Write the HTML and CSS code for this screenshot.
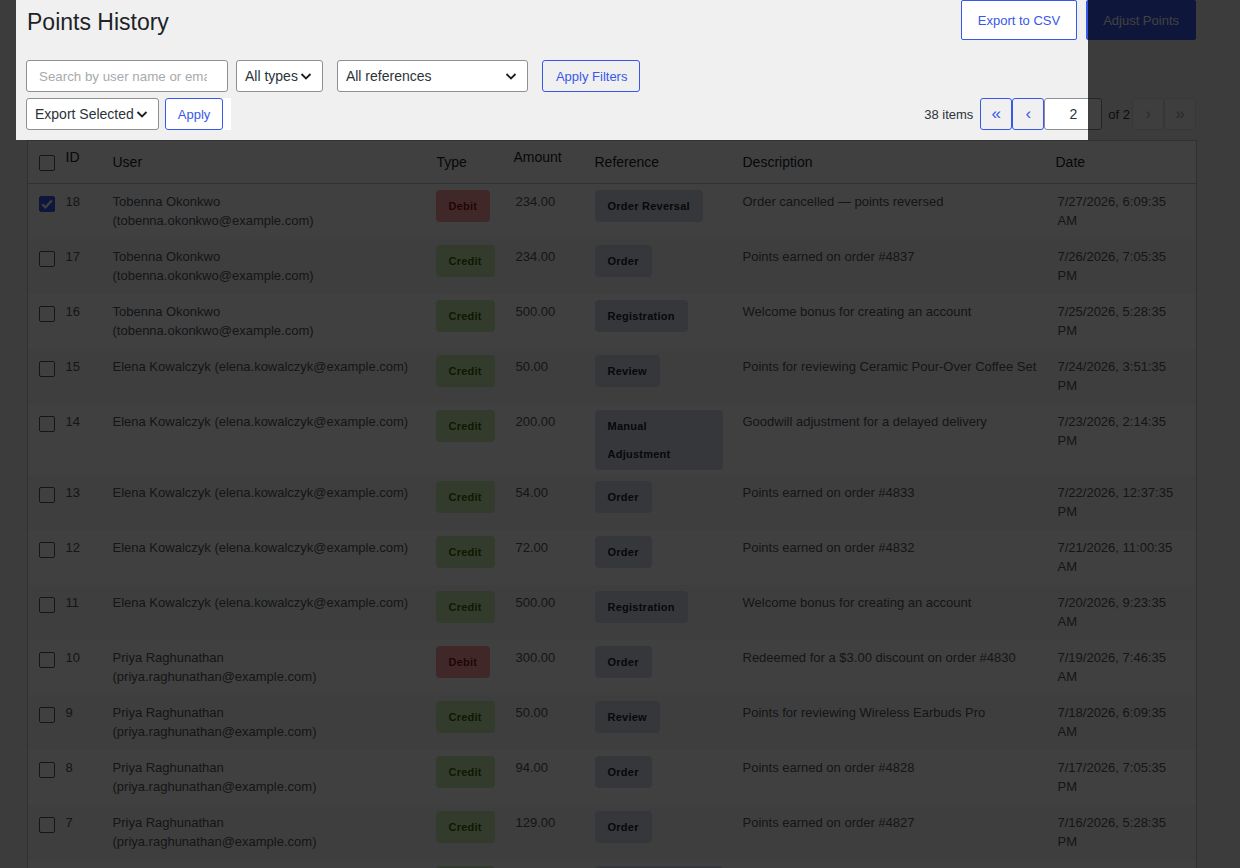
FILE: index.html
```html
<!DOCTYPE html>
<html lang="en">
<head>
<meta charset="utf-8">
<title>Points History</title>
<link rel="stylesheet" href="styles.css">
</head>
<body>
<div class="wrap">
  <header class="page-head">
    <h1 class="title">Points History</h1>
    <div class="head-actions">
      <button class="btn btn-secondary">Export to CSV</button>
      <button class="btn btn-primary">Adjust Points</button>
    </div>
  </header>

  <div class="filters">
    <input class="search" type="text" placeholder="Search by user name or email">
    <div class="select select-types"><span>All types</span><svg class="chev" viewBox="0 0 16 16" width="16" height="16"><path d="M3.5 6 L8 10.5 L12.5 6" fill="none" stroke="#1e1e1e" stroke-width="1.8"/></svg></div>
    <div class="select select-refs"><span>All references</span><svg class="chev" viewBox="0 0 16 16" width="16" height="16"><path d="M3.5 6 L8 10.5 L12.5 6" fill="none" stroke="#1e1e1e" stroke-width="1.8"/></svg></div>
    <button class="btn-small btn-outline">Apply Filters</button>
  </div>

  <div class="tablenav">
    <div class="bulk">
      <div class="select"><span>Export Selected</span><svg class="chev" viewBox="0 0 16 16" width="16" height="16"><path d="M3.5 6 L8 10.5 L12.5 6" fill="none" stroke="#1e1e1e" stroke-width="1.8"/></svg></div>
      <div class="apply-wrap"><button class="btn-small btn-white">Apply</button></div>
    </div>
    <div class="pager">
      <span class="count">38 items</span>
      <button class="pg">&laquo;</button>
      <button class="pg">&lsaquo;</button>
      <input class="pg-input" type="text" value="2">
      <span class="of">of 2</span>
      <button class="pg pg-disabled">&rsaquo;</button>
      <button class="pg pg-disabled">&raquo;</button>
    </div>
  </div>

  <table class="list">
    <colgroup>
      <col class="c-cb"><col class="c-id"><col class="c-user"><col class="c-type"><col class="c-amount"><col class="c-ref"><col class="c-desc"><col class="c-date">
    </colgroup>
    <thead>
      <tr>
        <th class="cb-cell"><span class="cb"></span></th>
        <th class="sortable">ID</th>
        <th>User</th>
        <th>Type</th>
        <th class="sortable">Amount</th>
        <th>Reference</th>
        <th>Description</th>
        <th>Date</th>
      </tr>
    </thead>
    <tbody>
      <tr>
        <td class="cb-cell"><span class="cb cb-checked"><svg viewBox="0 0 16 16" width="16" height="16"><path d="M3.2 8.3 L6.4 11.4 L12.8 4.6" fill="none" stroke="#fff" stroke-width="2.2"/></svg></span></td>
        <td>18</td><td>Tobenna Okonkwo (tobenna.okonkwo@example.com)</td>
        <td class="badge-cell"><span class="badge debit">Debit</span></td>
        <td class="amount">234.00</td>
        <td class="badge-cell"><span class="badge ref">Order Reversal</span></td>
        <td class="desc">Order cancelled — points reversed</td><td class="date">7/27/2026, 6:09:35 AM</td>
      </tr>
      <tr>
        <td class="cb-cell"><span class="cb"></span></td>
        <td>17</td><td>Tobenna Okonkwo (tobenna.okonkwo@example.com)</td>
        <td class="badge-cell"><span class="badge credit">Credit</span></td>
        <td class="amount">234.00</td>
        <td class="badge-cell"><span class="badge ref">Order</span></td>
        <td class="desc">Points earned on order #4837</td><td class="date">7/26/2026, 7:05:35 PM</td>
      </tr>
      <tr>
        <td class="cb-cell"><span class="cb"></span></td>
        <td>16</td><td>Tobenna Okonkwo (tobenna.okonkwo@example.com)</td>
        <td class="badge-cell"><span class="badge credit">Credit</span></td>
        <td class="amount">500.00</td>
        <td class="badge-cell"><span class="badge ref">Registration</span></td>
        <td class="desc">Welcome bonus for creating an account</td><td class="date">7/25/2026, 5:28:35 PM</td>
      </tr>
      <tr>
        <td class="cb-cell"><span class="cb"></span></td>
        <td>15</td><td>Elena Kowalczyk (elena.kowalczyk@example.com)</td>
        <td class="badge-cell"><span class="badge credit">Credit</span></td>
        <td class="amount">50.00</td>
        <td class="badge-cell"><span class="badge ref">Review</span></td>
        <td class="desc">Points for reviewing Ceramic Pour-Over Coffee Set</td><td class="date">7/24/2026, 3:51:35 PM</td>
      </tr>
      <tr>
        <td class="cb-cell"><span class="cb"></span></td>
        <td>14</td><td>Elena Kowalczyk (elena.kowalczyk@example.com)</td>
        <td class="badge-cell"><span class="badge credit">Credit</span></td>
        <td class="amount">200.00</td>
        <td class="badge-cell"><span class="badge ref">Manual Adjustment</span></td>
        <td class="desc">Goodwill adjustment for a delayed delivery</td><td class="date">7/23/2026, 2:14:35 PM</td>
      </tr>
      <tr>
        <td class="cb-cell"><span class="cb"></span></td>
        <td>13</td><td>Elena Kowalczyk (elena.kowalczyk@example.com)</td>
        <td class="badge-cell"><span class="badge credit">Credit</span></td>
        <td class="amount">54.00</td>
        <td class="badge-cell"><span class="badge ref">Order</span></td>
        <td class="desc">Points earned on order #4833</td><td class="date">7/22/2026, 12:37:35 PM</td>
      </tr>
      <tr>
        <td class="cb-cell"><span class="cb"></span></td>
        <td>12</td><td>Elena Kowalczyk (elena.kowalczyk@example.com)</td>
        <td class="badge-cell"><span class="badge credit">Credit</span></td>
        <td class="amount">72.00</td>
        <td class="badge-cell"><span class="badge ref">Order</span></td>
        <td class="desc">Points earned on order #4832</td><td class="date">7/21/2026, 11:00:35 AM</td>
      </tr>
      <tr>
        <td class="cb-cell"><span class="cb"></span></td>
        <td>11</td><td>Elena Kowalczyk (elena.kowalczyk@example.com)</td>
        <td class="badge-cell"><span class="badge credit">Credit</span></td>
        <td class="amount">500.00</td>
        <td class="badge-cell"><span class="badge ref">Registration</span></td>
        <td class="desc">Welcome bonus for creating an account</td><td class="date">7/20/2026, 9:23:35 AM</td>
      </tr>
      <tr>
        <td class="cb-cell"><span class="cb"></span></td>
        <td>10</td><td>Priya Raghunathan (priya.raghunathan@example.com)</td>
        <td class="badge-cell"><span class="badge debit">Debit</span></td>
        <td class="amount">300.00</td>
        <td class="badge-cell"><span class="badge ref">Order</span></td>
        <td class="desc">Redeemed for a $3.00 discount on order #4830</td><td class="date">7/19/2026, 7:46:35 AM</td>
      </tr>
      <tr>
        <td class="cb-cell"><span class="cb"></span></td>
        <td>9</td><td>Priya Raghunathan (priya.raghunathan@example.com)</td>
        <td class="badge-cell"><span class="badge credit">Credit</span></td>
        <td class="amount">50.00</td>
        <td class="badge-cell"><span class="badge ref">Review</span></td>
        <td class="desc">Points for reviewing Wireless Earbuds Pro</td><td class="date">7/18/2026, 6:09:35 AM</td>
      </tr>
      <tr>
        <td class="cb-cell"><span class="cb"></span></td>
        <td>8</td><td>Priya Raghunathan (priya.raghunathan@example.com)</td>
        <td class="badge-cell"><span class="badge credit">Credit</span></td>
        <td class="amount">94.00</td>
        <td class="badge-cell"><span class="badge ref">Order</span></td>
        <td class="desc">Points earned on order #4828</td><td class="date">7/17/2026, 7:05:35 PM</td>
      </tr>
      <tr>
        <td class="cb-cell"><span class="cb"></span></td>
        <td>7</td><td>Priya Raghunathan (priya.raghunathan@example.com)</td>
        <td class="badge-cell"><span class="badge credit">Credit</span></td>
        <td class="amount">129.00</td>
        <td class="badge-cell"><span class="badge ref">Order</span></td>
        <td class="desc">Points earned on order #4827</td><td class="date">7/16/2026, 5:28:35 PM</td>
      </tr>
      <tr>
        <td class="cb-cell"><span class="cb"></span></td>
        <td>6</td><td>Priya Raghunathan (priya.raghunathan@example.com)</td>
        <td class="badge-cell"><span class="badge credit">Credit</span></td>
        <td class="amount">250.00</td>
        <td class="badge-cell"><span class="badge ref">Manual Adjustment</span></td>
        <td class="desc">Loyalty bonus for a long-time customer</td><td class="date">7/15/2026, 3:51:35 PM</td>
      </tr>
    </tbody>
  </table>
</div>

<div class="spotlight" aria-hidden="true"></div>
</body>
</html>
```

FILE: styles.css
```css
html, body {
  margin: 0;
  padding: 0;
}

body {
  background: #f0f0f1;
  font-family: "Liberation Sans", Arial, sans-serif;
  color: #1d2327;
  font-size: 13px;
  position: relative;
  overflow: hidden;
  height: 868px;
}

.wrap {
  padding: 0 44px 0 26px;
}

/* header */
.page-head {
  display: flex;
  justify-content: space-between;
  align-items: center;
  height: 40px;
}

.title {
  margin: 0 0 0 1px;
  font-size: 23px;
  font-weight: 400;
  line-height: 30px;
  padding-top: 3px;
  color: #1d2327;
}

.head-actions {
  display: flex;
  gap: 9px;
  align-self: flex-start;
}

.btn {
  height: 40px;
  box-sizing: border-box;
  padding: 0 16px;
  font-family: inherit;
  font-size: 13px;
  border: 1px solid #3858e9;
  border-radius: 2px;
  cursor: pointer;
}

.btn-secondary {
  background: #fff;
  color: #3858e9;
}

.btn-primary {
  background: #3858e9;
  color: #fff;
}

/* filters */
.filters {
  display: flex;
  align-items: center;
  margin-top: 20px;
  height: 32px;
}

.search {
  width: 202px;
  height: 32px;
  box-sizing: border-box;
  border: 1px solid #8c8f94;
  border-radius: 3px;
  padding: 0 20px 0 12px;
  font-family: inherit;
  font-size: 13.333px;
  color: #2c3338;
  background: #fff;
  margin-right: 8px;
  outline: none;
}

.search::placeholder {
  color: #a7aaad;
}

.select {
  display: inline-flex;
  align-items: center;
  height: 32px;
  box-sizing: border-box;
  border: 1px solid #8c8f94;
  border-radius: 3px;
  background: #fff;
  padding: 0 8px;
  font-size: 14px;
  color: #2c3338;
  white-space: nowrap;
}

.select .chev {
  flex: none;
  display: block;
}

.select-types {
  margin-right: 14px;
}

.select-refs {
  width: 191px;
  justify-content: space-between;
  margin-right: 14px;
}

.btn-small {
  height: 32px;
  box-sizing: border-box;
  padding: 0 12px;
  font-family: inherit;
  font-size: 13px;
  border: 1px solid #3858e9;
  border-radius: 3px;
  color: #3858e9;
  cursor: pointer;
}

.btn-outline {
  background: #f0f0f1;
  padding: 0 12px 0 13px;
}

.btn-white {
  background: #fff;
}

/* tablenav */
.tablenav {
  display: flex;
  justify-content: space-between;
  align-items: center;
  margin-top: 6px;
  height: 32px;
}

.bulk {
  display: flex;
  align-items: center;
  gap: 6px;
}

.apply-wrap {
  background: #fff;
  padding-right: 8px;
  display: flex;
}

.pager {
  display: flex;
  align-items: center;
}

.count {
  font-size: 13px;
  color: #2c3338;
  margin-right: 7px;
}

.pg {
  width: 32px;
  height: 32px;
  box-sizing: border-box;
  padding: 0;
  border: 1px solid #3858e9;
  border-radius: 3px;
  background: #f0f0f1;
  color: #3858e9;
  font-family: inherit;
  font-size: 17px;
  line-height: 28px;
  text-align: center;
  cursor: pointer;
}

.pg-disabled {
  border-color: #dcdcde;
  background: #f6f7f7;
  color: #a7aaad;
  cursor: default;
}

.pg-input {
  width: 58px;
  height: 32px;
  box-sizing: border-box;
  border: 1px solid #8c8f94;
  border-radius: 3px;
  background: #fff;
  text-align: center;
  font-family: inherit;
  font-size: 14px;
  color: #2c3338;
  padding: 0;
  outline: none;
}

.of {
  font-size: 13px;
  color: #2c3338;
  margin: 0 2px 0 6px;
}

/* table */
.list {
  margin: 10px 0 0 1px;
  width: 1169px;
  border-collapse: collapse;
  table-layout: fixed;
  background: #fff;
  border: 1px solid #c3c4c7;
}

.c-cb { width: 28px; }
.c-id { width: 47px; }
.c-user { width: 324px; }
.c-type { width: 77px; }
.c-amount { width: 81px; }
.c-ref { width: 148px; }
.c-desc { width: 313px; }
.c-date { width: 151px; }

.list th {
  text-align: left;
  font-weight: 400;
  font-size: 14px;
  line-height: 19.5px;
  color: #1d2327;
  padding: 12px 10px 10px;
  border-bottom: 1px solid #c3c4c7;
  vertical-align: top;
}

.list th.sortable {
  padding-top: 7px;
}

.list td {
  font-size: 13px;
  line-height: 19.5px;
  color: #50575e;
  padding: 8px 10px;
  vertical-align: top;
}

.list td.amount {
  padding-left: 12px;
}

.list td.desc {
  padding-right: 4px;
}

.list td.date {
  padding-left: 12px;
}

.list tbody tr:nth-child(even) {
  background: #f6f7f7;
}

.list .cb-cell {
  padding: 12px 0 0 11px;
}

.list th.cb-cell {
  padding-top: 14px;
}

.cb {
  display: flex;
  align-items: center;
  justify-content: center;
  width: 16px;
  height: 16px;
  box-sizing: border-box;
  border: 1px solid #50575e;
  border-radius: 2px;
  background: #fff;
}

.cb-checked {
  background: #3858e9;
  border-color: #3858e9;
}

.cb svg {
  display: block;
  flex: none;
}

.list td.badge-cell {
  padding: 6px 10px 5px 9px;
}

.list td.badge-cell + .amount + .badge-cell {
  padding-left: 10px;
}

.badge {
  display: inline-block;
  vertical-align: top;
  padding: 2px 13px;
  line-height: 28px;
  font-size: 11px;
  font-weight: 700;
  letter-spacing: 0.25px;
  border-radius: 4px;
}

.debit {
  background: #ffa0a0;
  color: #8f1212;
}

.credit {
  background: #c9ecb4;
  color: #3a6600;
}

.ref {
  background: #d2dce8;
  color: #1d2327;
}

/* tour spotlight over the page */
.spotlight {
  position: absolute;
  left: 16px;
  top: -20px;
  width: 1072px;
  height: 160px;
  box-shadow: 0 0 0 3000px rgba(0, 0, 0, 0.75);
  pointer-events: none;
  z-index: 10;
}
```
